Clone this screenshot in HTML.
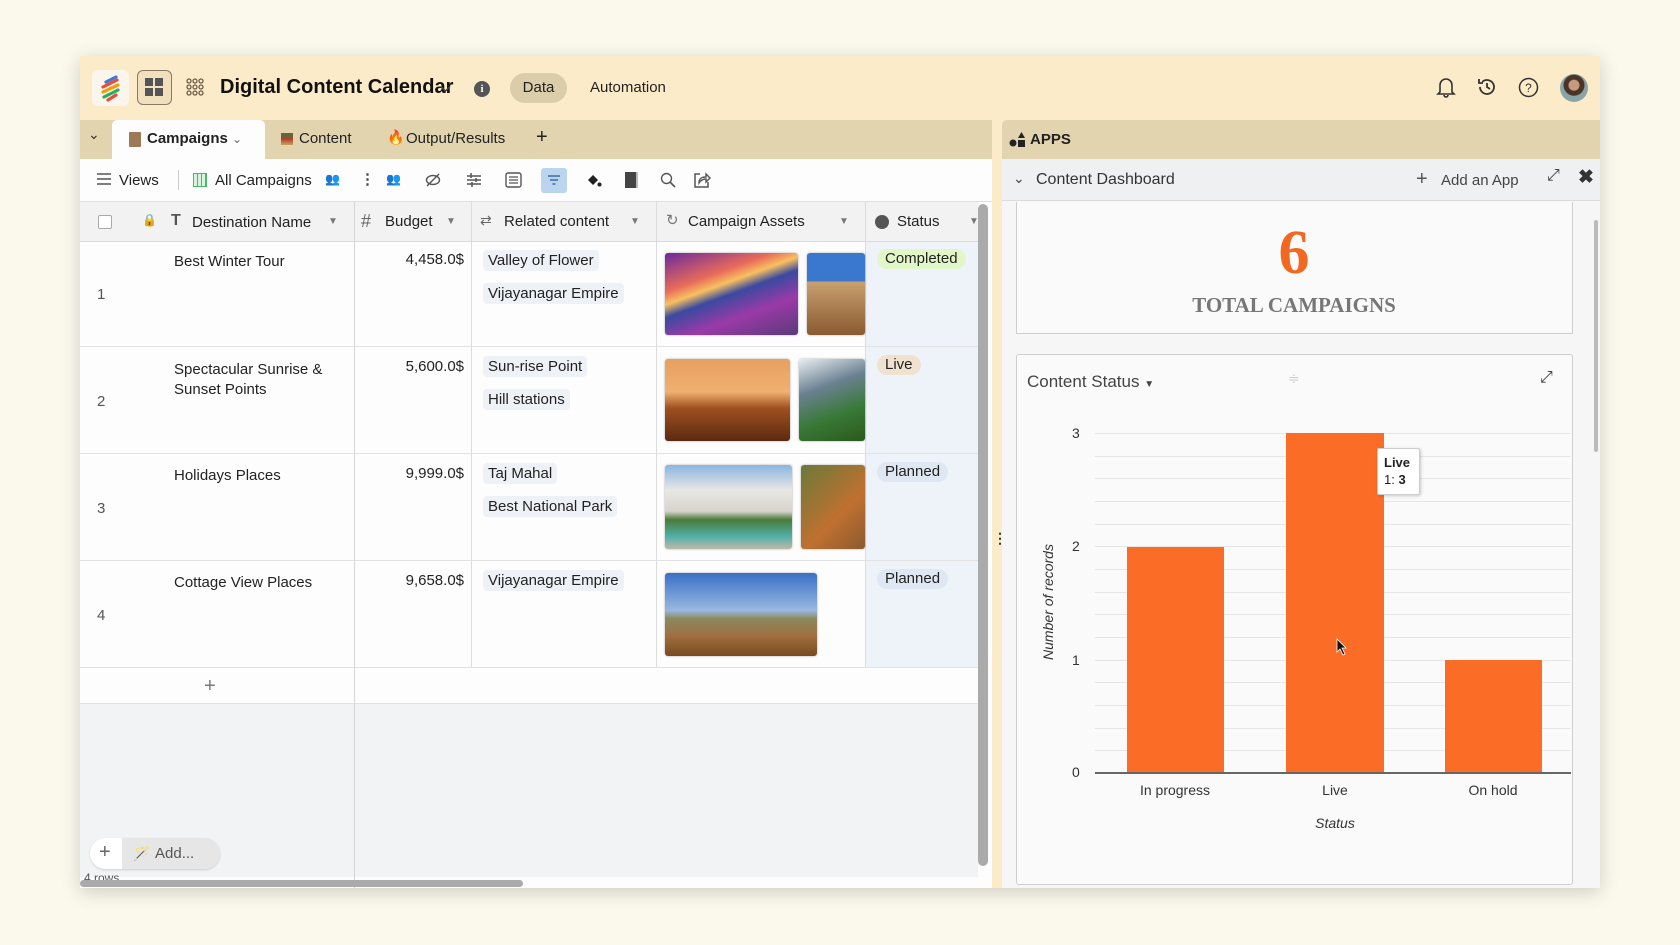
<!DOCTYPE html>
<html><head><meta charset="utf-8"><style>
*{box-sizing:border-box;margin:0;padding:0}
body{width:1680px;height:945px;background:#fbf9ec;font-family:"Liberation Sans",sans-serif;position:relative;overflow:hidden;color:#222}
.a{position:absolute}
.frame{left:80px;top:56px;width:1520px;height:832px;background:#fcebc8;box-shadow:0 4px 18px rgba(0,0,0,.18);overflow:hidden}
.t{position:absolute;white-space:nowrap}
.chip{position:absolute;background:#eef1f5;border-radius:4px;padding:0 5px;height:21px;line-height:21px;font-size:15px;color:#222}
.st{position:absolute;border-radius:10px;padding:0 8px;height:20px;line-height:20px;font-size:15px;color:#222}
.img{position:absolute;border-radius:3px;box-shadow:0 0 2px rgba(0,0,0,.35)}
.hl{position:absolute;height:1px;background:#e2e2e2}
.vl{position:absolute;width:1px;background:#dcdcdc}
.g{position:absolute;left:1095px;width:476px;height:1px;background:#e6e6e6}
</style></head><body>
<div class="a frame"></div>

<div class="a" style="left:92px;top:70px;width:37px;height:36px;background:#fbf6ec;border-radius:6px"></div>
<svg class="a" style="left:98px;top:74px" width="26" height="28" viewBox="0 0 26 28"><g stroke-width="3.2" stroke-linecap="round"><path d="M8 8 L18 3" stroke="#3a7bd5"/><path d="M5 13 L19 6" stroke="#e94b3c"/><path d="M5 18 L20 11" stroke="#f39c12"/><path d="M6 23 L20 16" stroke="#27ae60"/><path d="M10 26 L18 21" stroke="#e94b3c"/></g></svg>
<div class="a" style="left:137px;top:70px;width:35px;height:35px;border:1.5px solid #8a7a63;border-radius:6px;background:#f1dfbd"></div>
<div class="a" style="left:145px;top:78px;width:8px;height:8px;background:#555;box-shadow:10px 0 #555,0 10px #555,10px 10px #555"></div>
<svg class="a" style="left:186px;top:78px" width="18" height="18"><g fill="none" stroke="#6b5d48" stroke-width="1.3"><circle cx="3" cy="3" r="2"/><circle cx="9" cy="3" r="2"/><circle cx="15" cy="3" r="2"/><circle cx="3" cy="9" r="2"/><circle cx="9" cy="9" r="2"/><circle cx="15" cy="9" r="2"/><circle cx="3" cy="15" r="2"/><circle cx="9" cy="15" r="2"/><circle cx="15" cy="15" r="2"/></g></svg>
<div class="t" style="left:220px;top:76px;font-size:20px;font-weight:bold;color:#111">Digital Content Calendar</div>
<svg class="a" style="left:440px;top:85px" width="11" height="8"><path d="M1 1.5 L5.5 6 L10 1.5" fill="none" stroke="#444" stroke-width="1.5"/></svg>
<div class="a" style="left:474px;top:81px;width:16px;height:16px;border-radius:50%;background:#555;color:#fff;font-size:11px;text-align:center;line-height:16px;font-weight:bold;font-family:'Liberation Serif',serif">i</div>
<div class="a" style="left:510px;top:73px;width:57px;height:30px;border-radius:15px;background:#dccdaa;font-size:15px;text-align:center;line-height:30px">Data</div>
<div class="t" style="left:590px;top:79px;font-size:15px">Automation</div>
<svg class="a" style="left:1436px;top:76px" width="20" height="22" viewBox="0 0 20 22"><path d="M4 16 V9 a6 6 0 0 1 12 0 V16 L18 18 H2 Z M8 19 a2 2 0 0 0 4 0" fill="none" stroke="#333" stroke-width="1.6"/></svg>
<svg class="a" style="left:1476px;top:76px" width="22" height="22" viewBox="0 0 22 22"><path d="M4 11 a7 7 0 1 0 2.2-5.1 M3 3 V7 H7 M11 7 V11 L14 13" fill="none" stroke="#333" stroke-width="1.8"/></svg>
<svg class="a" style="left:1518px;top:77px" width="21" height="21" viewBox="0 0 21 21"><circle cx="10.5" cy="10.5" r="9" fill="none" stroke="#333" stroke-width="1.5"/><text x="10.5" y="15" text-anchor="middle" font-size="12" font-family="Liberation Sans" fill="#333">?</text></svg>
<div class="a" style="left:1560px;top:74px;width:28px;height:28px;border-radius:50%;background:radial-gradient(circle at 50% 40%,#c79a80 0 5px,#4a3428 6px 10px,#8aa5a8 11px)"></div>

<div class="a" style="left:80px;top:120px;width:912px;height:39px;background:#e3d4b0"></div>
<div class="t" style="left:88px;top:126px;font-size:14px;color:#333">⌄</div>
<div class="a" style="left:112px;top:120px;width:153px;height:39px;background:#fdfdfd;border-radius:5px 5px 0 0"></div>
<div class="a" style="left:129px;top:132px;width:12px;height:15px;background:#9b7a55;border-radius:1px"></div>
<div class="t" style="left:147px;top:130px;font-size:15px;font-weight:bold;color:#222">Campaigns <span style="font-weight:normal;color:#666;font-size:12px">⌄</span></div>
<div class="a" style="left:281px;top:133px;width:12px;height:12px;background:linear-gradient(#3a7a3a,#b04030,#c9a25b)"></div>
<div class="t" style="left:299px;top:130px;font-size:15px;color:#222">Content</div>
<div class="t" style="left:387px;top:129px;font-size:14px;color:#e8541c">🔥</div>
<div class="t" style="left:406px;top:130px;font-size:15px;color:#222">Output/Results</div>
<div class="t" style="left:536px;top:126px;font-size:20px;color:#222">+</div>

<div class="a" style="left:80px;top:159px;width:912px;height:729px;background:#fdfdfd"></div>
<svg class="a" style="left:96px;top:172px" width="16" height="14"><g stroke="#555" stroke-width="1.5"><path d="M1 2H15M1 7H15M1 12H15"/></g></svg>
<div class="t" style="left:119px;top:172px;font-size:15px">Views</div>
<div class="a" style="left:178px;top:170px;width:1px;height:20px;background:#ccc"></div>
<div class="a" style="left:193px;top:173px;width:14px;height:14px;border:1.5px solid #4cb86a;background:repeating-linear-gradient(90deg,transparent 0 3px,#4cb86a 3px 4px),#d9f3df"></div>
<div class="t" style="left:215px;top:172px;font-size:15px">All Campaigns</div>
<div class="t" style="left:325px;top:172px;font-size:12px;color:#444">👥</div>
<div class="t" style="left:360px;top:170px;font-size:15px;color:#444;font-weight:bold">⋮</div>
<div class="t" style="left:386px;top:172px;font-size:12px;color:#444">👥</div>
<svg class="a" style="left:425px;top:172px" width="16" height="16"><ellipse cx="8" cy="8" rx="6.5" ry="4.5" fill="none" stroke="#555" stroke-width="1.4"/><path d="M2 14L14 2" stroke="#555" stroke-width="1.4"/></svg>
<svg class="a" style="left:466px;top:172px" width="16" height="16"><g stroke="#555" stroke-width="1.5"><path d="M1 4H15M1 8H15M1 12H15M5 1V6M10 6V10M6 10V15"/></g></svg>
<svg class="a" style="left:505px;top:172px" width="17" height="16"><rect x="1" y="1" width="15" height="14" rx="2" fill="none" stroke="#555" stroke-width="1.4"/><path d="M4 5H13M4 8H13M4 11H13" stroke="#555" stroke-width="1.2"/></svg>
<div class="a" style="left:541px;top:168px;width:26px;height:25px;background:#bcd5ef;border-radius:3px"></div>
<svg class="a" style="left:546px;top:173px" width="16" height="14"><g stroke="#3a6ea5" stroke-width="1.5"><path d="M2 3H14M4 7H12M6.5 11H9.5"/></g></svg>
<svg class="a" style="left:585px;top:172px" width="17" height="16"><path d="M3 8 L8 3 L13 8 L8 13Z" fill="#222"/><circle cx="14.5" cy="12.5" r="2" fill="#222"/></svg>
<div class="a" style="left:625px;top:172px;width:13px;height:16px;background:#444;border-right:2px solid #bbb"></div>
<svg class="a" style="left:660px;top:172px" width="16" height="16"><circle cx="6.5" cy="6.5" r="5" fill="none" stroke="#555" stroke-width="1.4"/><path d="M10 10L15 15" stroke="#555" stroke-width="1.6"/></svg>
<svg class="a" style="left:693px;top:171px" width="18" height="18"><path d="M7 3H2V16H15V11" fill="none" stroke="#555" stroke-width="1.5"/><path d="M6 12 C6 7 9 6 13 6 V3 L17 7 L13 11 V8 C10 8 8 9 6 12Z" fill="none" stroke="#555" stroke-width="1.4"/></svg>
<div class="hl" style="left:80px;top:201px;width:912px;background:#dedede"></div>

<div class="a" style="left:80px;top:202px;width:898px;height:39px;background:#f2f2f3"></div>
<div class="hl" style="left:80px;top:241px;width:898px;background:#dadada"></div>
<div class="a" style="left:98px;top:215px;width:14px;height:14px;border:1px solid #aaa;background:#fff;border-radius:2px"></div>
<div class="t" style="left:142px;top:213px;font-size:12px;color:#aaa">🔒</div>
<div class="t" style="left:171px;top:212px;font-size:16px;color:#555;font-weight:bold">T</div>
<div class="t" style="left:192px;top:214px;font-size:15px;color:#222">Destination Name</div>
<div class="t" style="left:328px;top:216px;font-size:10px;color:#777">▼</div>
<div class="t" style="left:361px;top:211px;font-size:18px;color:#666">#</div>
<div class="t" style="left:385px;top:213px;font-size:15px">Budget</div>
<div class="t" style="left:446px;top:216px;font-size:10px;color:#777">▼</div>
<div class="vl" style="left:471px;top:202px;height:465px"></div>
<div class="t" style="left:480px;top:212px;font-size:14px;color:#666">⇄</div>
<div class="t" style="left:504px;top:213px;font-size:15px">Related content</div>
<div class="t" style="left:630px;top:216px;font-size:10px;color:#777">▼</div>
<div class="vl" style="left:656px;top:202px;height:465px"></div>
<div class="t" style="left:666px;top:211px;font-size:15px;color:#777">↻</div>
<div class="t" style="left:688px;top:213px;font-size:15px">Campaign Assets</div>
<div class="t" style="left:839px;top:216px;font-size:10px;color:#777">▼</div>
<div class="vl" style="left:865px;top:202px;height:465px"></div>
<div class="a" style="left:875px;top:215px;width:14px;height:14px;border-radius:50%;background:#555"></div>
<div class="t" style="left:897px;top:213px;font-size:15px">Status</div>
<div class="t" style="left:969px;top:216px;font-size:10px;color:#777">▼</div>

<div class="a" style="left:866px;top:242px;width:112px;height:425px;background:#eef3f9"></div>

<div class="hl" style="left:80px;top:346px;width:898px"></div>
<div class="hl" style="left:80px;top:453px;width:898px"></div>
<div class="hl" style="left:80px;top:560px;width:898px"></div>
<div class="hl" style="left:80px;top:667px;width:898px"></div>
<div class="hl" style="left:80px;top:703px;width:898px"></div>
<div class="a" style="left:80px;top:704px;width:898px;height:173px;background:#f2f3f4"></div>
<div class="vl" style="left:354px;top:202px;height:686px;background:#d5d5d5"></div>

<div class="t" style="left:97px;top:286px;font-size:15px;color:#555">1</div>
<div class="t" style="left:174px;top:253px;font-size:15px">Best Winter Tour</div>
<div class="t" style="left:380px;top:251px;width:84px;text-align:right;font-size:15px">4,458.0$</div>
<div class="chip" style="left:483px;top:250px">Valley of Flower</div>
<div class="chip" style="left:483px;top:283px">Vijayanagar Empire</div>
<div class="img" style="left:665px;top:253px;width:133px;height:82px;background:linear-gradient(160deg,#6a2a9c 0%,#e86b5a 30%,#f8c060 40%,#3a4aa0 50%,#9a3aa8 70%,#5a3a7a 100%)"></div>
<div class="img" style="left:807px;top:253px;width:58px;height:82px;background:linear-gradient(#3a78d0 0 35%,#c9a070 35%,#8a5a30 100%)"></div>
<div class="st" style="left:877px;top:249px;background:#e1f7c8">Completed</div>

<div class="t" style="left:97px;top:393px;font-size:15px;color:#555">2</div>
<div class="t" style="left:174px;top:360px;font-size:15px;line-height:20px">Spectacular Sunrise &amp;<br>Sunset Points</div>
<div class="t" style="left:380px;top:358px;width:84px;text-align:right;font-size:15px">5,600.0$</div>
<div class="chip" style="left:483px;top:356px">Sun-rise Point</div>
<div class="chip" style="left:483px;top:389px">Hill stations</div>
<div class="img" style="left:665px;top:359px;width:125px;height:82px;background:linear-gradient(#e7a060 0%,#f0b070 40%,#a05020 60%,#5a2a10 100%)"></div>
<div class="img" style="left:799px;top:359px;width:66px;height:82px;background:linear-gradient(160deg,#e8eef3 0%,#6a8090 35%,#3a7a3a 65%,#2a5a1a 100%)"></div>
<div class="st" style="left:877px;top:355px;background:#f1e2d0">Live</div>

<div class="t" style="left:97px;top:500px;font-size:15px;color:#555">3</div>
<div class="t" style="left:174px;top:467px;font-size:15px">Holidays Places</div>
<div class="t" style="left:380px;top:465px;width:84px;text-align:right;font-size:15px">9,999.0$</div>
<div class="chip" style="left:483px;top:463px">Taj Mahal</div>
<div class="chip" style="left:483px;top:496px">Best National Park</div>
<div class="img" style="left:665px;top:465px;width:127px;height:84px;background:linear-gradient(#8ab5e0 0%,#e8e8e4 30%,#d8d4cc 55%,#4a7a3a 65%,#50b0a8 85%,#c0b8a8 100%)"></div>
<div class="img" style="left:801px;top:465px;width:64px;height:84px;background:linear-gradient(135deg,#6a7a3a,#c07030 60%,#8a5a30)"></div>
<div class="st" style="left:877px;top:462px;background:#dfe7f2">Planned</div>

<div class="t" style="left:97px;top:607px;font-size:15px;color:#555">4</div>
<div class="t" style="left:174px;top:574px;font-size:15px">Cottage View Places</div>
<div class="t" style="left:380px;top:572px;width:84px;text-align:right;font-size:15px">9,658.0$</div>
<div class="chip" style="left:483px;top:570px">Vijayanagar Empire</div>
<div class="img" style="left:665px;top:573px;width:152px;height:83px;background:linear-gradient(#3a70c8 0%,#9ab8e0 45%,#8a8a60 55%,#a07040 75%,#7a4a20 100%)"></div>
<div class="st" style="left:877px;top:569px;background:#dfe7f2">Planned</div>

<div class="t" style="left:204px;top:675px;font-size:20px;color:#777">+</div>
<div class="a" style="left:90px;top:838px;width:130px;height:31px;border-radius:16px;background:#e6e6e6;box-shadow:0 1px 2px rgba(0,0,0,.15)"></div>
<div class="a" style="left:90px;top:838px;width:32px;height:31px;border-radius:16px 0 0 16px;background:#fff"></div>
<div class="t" style="left:99px;top:841px;font-size:20px;color:#666">+</div>
<div class="t" style="left:133px;top:845px;font-size:14px;color:#666">🪄</div>
<div class="t" style="left:155px;top:845px;font-size:15px;color:#555">Add...</div>
<div class="t" style="left:84px;top:871px;font-size:12px;color:#555">4 rows</div>
<div class="a" style="left:80px;top:880px;width:443px;height:7px;background:#aaa;border-radius:4px"></div>
<div class="a" style="left:978px;top:204px;width:10px;height:662px;background:#aaa;border-radius:5px"></div>
<div class="t" style="left:993px;top:530px;font-size:14px;font-weight:bold;color:#333">⋮</div>

<div class="a" style="left:1002px;top:120px;width:598px;height:39px;background:#e3d4b0;border-radius:5px 0 0 0"></div>
<svg class="a" style="left:1009px;top:131px" width="17" height="17"><circle cx="4" cy="12" r="3.5" fill="#222"/><rect x="9" y="9" width="7" height="7" fill="#222"/><path d="M12.5 1 L16 7 H9Z" fill="#222"/></svg>
<div class="t" style="left:1030px;top:131px;font-size:15px;font-weight:bold">APPS</div>
<div class="a" style="left:1002px;top:159px;width:598px;height:729px;background:#f6f6f6"></div>
<div class="a" style="left:1002px;top:159px;width:598px;height:42px;background:#eff0f2;border-bottom:1px solid #dcdcdc"></div>
<div class="t" style="left:1013px;top:170px;font-size:14px;color:#444">⌄</div>
<div class="t" style="left:1036px;top:171px;font-size:16px;color:#333">Content Dashboard</div>
<div class="t" style="left:1416px;top:168px;font-size:20px;color:#555">+</div>
<div class="t" style="left:1441px;top:172px;font-size:15px;color:#444">Add an App</div>
<div class="t" style="left:1547px;top:167px;font-size:16px;color:#333">⤢</div>
<div class="t" style="left:1578px;top:166px;font-size:19px;color:#333;font-weight:bold">✖</div>
<div class="a" style="left:1594px;top:220px;width:4px;height:232px;background:#bbb;border-radius:2px"></div>

<div class="a" style="left:1016px;top:202px;width:557px;height:132px;background:#fafafa;border:1px solid #cfcfcf;border-top:none"></div>
<div class="t" style="left:1194px;top:222px;width:200px;text-align:center;font-family:'Liberation Serif',serif;font-size:62px;font-weight:bold;color:#f26722;line-height:62px">6</div>
<div class="t" style="left:1144px;top:293px;width:300px;text-align:center;font-family:'Liberation Serif',serif;font-size:21px;font-weight:bold;color:#777">TOTAL CAMPAIGNS</div>

<div class="a" style="left:1016px;top:354px;width:557px;height:531px;background:#fafafa;border:1px solid #cfcfcf;border-radius:3px"></div>
<div class="t" style="left:1027px;top:372px;font-size:17px;color:#444">Content Status <span style="font-size:10px">▼</span></div>
<div class="t" style="left:1288px;top:370px;font-size:14px;color:#ccc">≑</div>
<div class="t" style="left:1540px;top:369px;font-size:16px;color:#333">⤢</div>

<div class="g" style="top:433px"></div><div class="g" style="top:456px"></div><div class="g" style="top:478px"></div><div class="g" style="top:501px"></div><div class="g" style="top:524px"></div>
<div class="g" style="top:546px"></div><div class="g" style="top:569px"></div><div class="g" style="top:592px"></div><div class="g" style="top:614px"></div><div class="g" style="top:637px"></div>
<div class="g" style="top:660px"></div><div class="g" style="top:682px"></div><div class="g" style="top:705px"></div><div class="g" style="top:728px"></div><div class="g" style="top:750px"></div>
<div class="a" style="left:1095px;top:772px;width:476px;height:2px;background:#666"></div>
<div class="t" style="left:1072px;top:425px;font-size:14px;color:#333">3</div>
<div class="t" style="left:1072px;top:538px;font-size:14px;color:#333">2</div>
<div class="t" style="left:1072px;top:652px;font-size:14px;color:#333">1</div>
<div class="t" style="left:1072px;top:764px;font-size:14px;color:#333">0</div>
<div class="a" style="left:1127px;top:547px;width:97px;height:225px;background:#fb6d26"></div>
<div class="a" style="left:1286px;top:433px;width:98px;height:339px;background:#fb6d26"></div>
<div class="a" style="left:1445px;top:660px;width:97px;height:112px;background:#fb6d26"></div>
<div class="t" style="left:1115px;top:782px;width:120px;text-align:center;font-size:14px;color:#333">In progress</div>
<div class="t" style="left:1275px;top:782px;width:120px;text-align:center;font-size:14px;color:#333">Live</div>
<div class="t" style="left:1433px;top:782px;width:120px;text-align:center;font-size:14px;color:#333">On hold</div>
<div class="t" style="left:1275px;top:815px;width:120px;text-align:center;font-size:14px;font-style:italic;color:#333">Status</div>
<div class="t" style="left:978px;top:594px;width:140px;text-align:center;font-size:14px;font-style:italic;color:#333;transform:rotate(-90deg)">Number of records</div>
<div class="a" style="left:1377px;top:448px;width:43px;height:47px;background:#fff;border:1px solid #ccc;border-radius:2px;box-shadow:1px 1px 3px rgba(0,0,0,.2)"></div>
<div class="t" style="left:1384px;top:454px;font-size:13px;font-weight:bold;line-height:17px">Live<br><span style="font-weight:normal">1:</span> 3</div>
<svg class="a" style="left:1336px;top:638px" width="12" height="18"><path d="M1 1 V14 L4 11 L7 17 L9 16 L6 10 H10Z" fill="#111" stroke="#fff" stroke-width=".8"/></svg>
</body></html>
